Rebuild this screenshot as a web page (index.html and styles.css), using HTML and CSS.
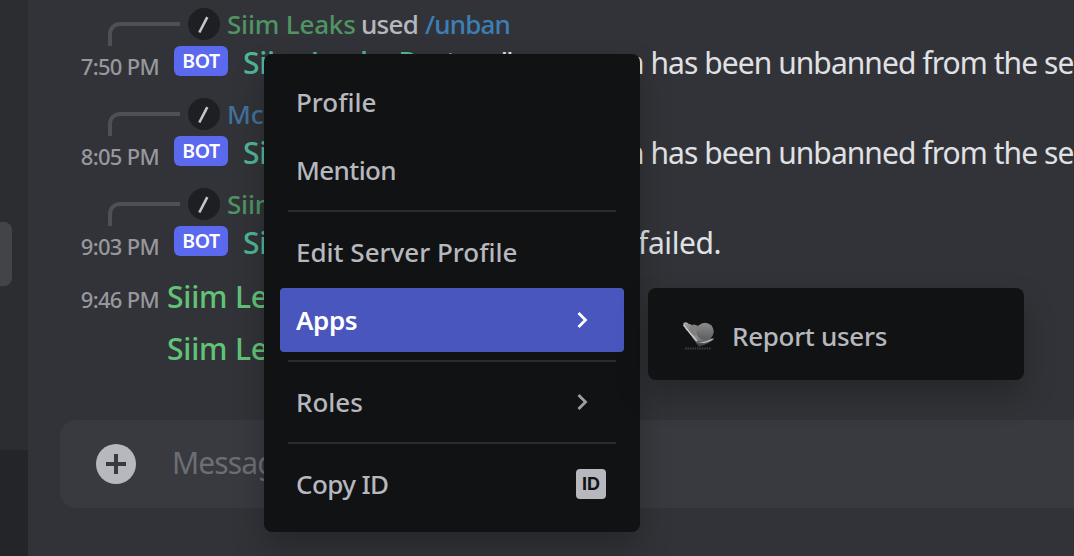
FILE: index.html
```html
<!DOCTYPE html>
<html lang="en">
<head>
<meta charset="utf-8">
<title>Chat</title>
<link rel="stylesheet" href="styles.css">
</head>
<body>
<div class="app">
  <aside class="rail"><div class="scroll-pill"></div><div class="account"></div></aside>
  <main class="chat">
    <div class="messages">
      <article class="message">
        <div class="reply"><span class="spine"></span><span class="slash"><svg viewBox="0 0 32 32"><path d="M11.3 24.5 19.3 9.2" /></svg></span><span class="invoker green">Siim Leaks</span><span class="used">used</span><span class="command">/unban</span></div>
        <div class="line"><time>7:50 PM</time><span class="bot">BOT</span><span class="author">Siim Leaks Partner</span><span class="quote">"</span><span class="body">n has been unbanned from the server</span></div>
      </article>
      <article class="message">
        <div class="reply"><span class="spine"></span><span class="slash"><svg viewBox="0 0 32 32"><path d="M11.3 24.5 19.3 9.2" /></svg></span><span class="invoker blue">Mc</span></div>
        <div class="line"><time>8:05 PM</time><span class="bot">BOT</span><span class="author">Siim</span><span class="quote"></span><span class="body">n has been unbanned from the server</span></div>
      </article>
      <article class="message">
        <div class="reply"><span class="spine"></span><span class="slash"><svg viewBox="0 0 32 32"><path d="M11.3 24.5 19.3 9.2" /></svg></span><span class="invoker green">Siim</span></div>
        <div class="line"><time>9:03 PM</time><span class="bot">BOT</span><span class="author">Siim</span><span class="quote"></span><span class="body failed">failed.</span></div>
      </article>
      <div class="plain"><time>9:46 PM</time><span class="member">Siim Le</span></div>
      <div class="plain"><time></time><span class="member">Siim Le</span></div>
    </div>
    <div class="composer"><svg class="plus" viewBox="0 0 40 40"><circle cx="20" cy="20" r="20" /><path d="M20 10V30M10 20H30" /></svg><span class="placeholder">Message</span></div>
  </main>
</div>
<nav class="menu">
  <div class="item"><span>Profile</span></div>
  <div class="item"><span class="tight">Mention</span></div>
  <hr>
  <div class="item"><span>Edit Server Profile</span></div>
  <div class="item active"><span>Apps</span><svg class="chevron" viewBox="0 0 20 20"><path d="M5.5 3 12.5 10 5.5 17" /></svg></div>
  <hr>
  <div class="item"><span>Roles</span><svg class="chevron" viewBox="0 0 20 20"><path d="M5.5 3 12.5 10 5.5 17" /></svg></div>
  <hr>
  <div class="item"><span class="tight">Copy ID</span><span class="id">ID</span></div>
</nav>
<div class="submenu">
  <svg class="emblem" viewBox="0 0 36 32">
    <defs><linearGradient id="ball" x2="0" y2="1"><stop stop-color="#8c8c8c"/><stop offset="1" stop-color="#5c5c5c"/></linearGradient><linearGradient id="wing" x2="0" y2="1"><stop stop-color="#a8a8a8"/><stop offset=".65" stop-color="#8a8a8a"/><stop offset="1" stop-color="#2c2c2c"/></linearGradient></defs>
    <path d="M1 3Q2 0 6 2L17 16 32 18Q28 22 17 26Z" fill="url(#wing)"/>
    <circle cx="7" cy="6.5" r="3.5" fill="#909090"/><circle cx="12" cy="9" r="5.5" fill="#808080"/>
    <circle cx="23" cy="10.5" r="8.7" fill="url(#ball)"/>
    <path d="M1.5 4 8 12 15 20" fill="none" stroke="#ccc" stroke-width="1.3"/>
    <path d="M16 22Q25 21 32 17Q30 20 22 22Z" fill="#c4c4c4"/>
    <path d="M3 27.5H29" stroke="#3c3c3c" stroke-width="1.8" stroke-dasharray="1.6 .8"/>
  </svg>
  <span class="report">Report users</span>
</div>
</body>
</html>
```
FILE: styles.css
```css
* { box-sizing: border-box; }
body { margin: 0; width: 1074px; height: 556px; overflow: hidden; position: relative; background: #323338; font-family: "Noto Sans", "Open Sans", sans-serif; white-space: nowrap; }
.app { display: flex; width: 1074px; height: 556px; overflow: hidden; }
.rail { width: 28px; flex: none; background: #2c2d31; display: flex; flex-direction: column; }
.scroll-pill { width: 12px; height: 64px; margin-top: 222px; background: #43444a; border-radius: 0 8px 8px 0; }
.account { margin-top: auto; height: 106px; background: #242528; }
.chat { width: 1046px; flex: none; height: 556px; overflow: hidden; }
.messages { height: 420px; padding-top: 8px; }
.message { height: 90px; }
.reply { display: flex; height: 32px; align-items: center; font-size: 26px; line-height: 32px; font-weight: 500; letter-spacing: -.2px; }
.spine { width: 72px; height: 24px; margin: 20px 8px 0 80px; border: solid #4d5056; border-width: 4px 0 0 4px; border-radius: 12px 0 0 0; }
.slash { width: 32px; height: 32px; border-radius: 50%; background: #1e1f22; margin-right: 7px; }
.slash svg { display: block; fill: none; stroke: #c5c6cb; stroke-width: 2.6; }
.green { color: #4e9563; width: 128px; }
.blue { color: #41729d; }
.used { color: #b7b8be; margin-left: 6px; width: 57px; letter-spacing: -.7px; }
.command { color: #3c7fb5; margin-left: 7px; letter-spacing: -.8px; }
.line { display: flex; height: 46px; align-items: center; font-size: 30px; line-height: 44px; }
time { width: 131px; text-align: right; color: #97989e; font-size: 22px; line-height: 44px; flex: none; padding-top: 5px; font-weight: 500; letter-spacing: -.7px; }
.bot { width: 54px; height: 30px; margin: -5px 15px 0 15px; border-radius: 6px; background: #5a69ee; color: #fff; font-size: 19.5px; line-height: 30px; text-align: center; font-weight: 600; letter-spacing: -.4px; flex: none; }
.author { width: 258px; color: #50b696; font-weight: 500; letter-spacing: -.3px; flex: none; }
.quote { width: 124px; color: #e0e1e5; flex: none; }
.body { color: #e0e1e5; letter-spacing: -.94px; margin-left: 1px; }
.failed { margin-left: 13px; letter-spacing: -.4px; }
.plain { height: 52px; display: flex; align-items: center; font-size: 30px; line-height: 36px; }
.message + .plain { margin-top: -7px; }
.plain time { padding-top: 4px; }
.member { color: #61c377; margin-left: 8px; font-weight: 500; letter-spacing: -.2px; }
.composer { height: 88px; margin-left: 32px; border-radius: 16px 0 0 16px; background: #393a3f; display: flex; align-items: center; }
.plus { width: 40px; height: 40px; margin-left: 36px; fill: #b7b8be; }
.plus path { stroke: #393a3f; stroke-width: 4; }
.placeholder { margin-left: 36px; margin-top: -3px; color: #6c6e75; font-size: 30px; letter-spacing: -.9px; }
.menu { position: absolute; left: 264px; top: 54px; width: 376px; height: 478px; background: #111214; border-radius: 8px; padding: 16px; box-shadow: 0 16px 32px rgba(0,0,0,.24); color: #b7b8be; font-size: 26px; font-weight: 500; }
.item { height: 64px; margin-bottom: 4px; padding: 0 18px 0 16px; border-radius: 4px; display: flex; justify-content: space-between; align-items: center; }
.tight { letter-spacing: -.6px; }
.active { color: #fff; background: #4956bd; font-weight: 600; letter-spacing: -.4px; }
.menu hr { border: 0; height: 2px; background: #2b2c31; margin: 8px; }
.chevron { width: 20px; height: 20px; margin-right: 13px; fill: none; stroke: currentColor; stroke-width: 2.8; opacity: .85; }
.active .chevron { opacity: 1; }
.id { width: 30px; height: 30px; border-radius: 4px; background: #b7b8be; color: #111214; font-family: Inter, sans-serif; font-size: 18px; font-weight: 700; line-height: 30px; text-align: center; }
.submenu { position: absolute; left: 648px; top: 288px; width: 376px; height: 92px; border-radius: 8px; background: #111214; box-shadow: 0 16px 32px rgba(0,0,0,.24); display: flex; align-items: center; padding: 4px 32px 0; color: #b7b8be; font-size: 26px; font-weight: 500; }
.emblem { width: 36px; height: 32px; margin: 2px 14px 0 2px; }
.report { letter-spacing: -.3px; }
```
